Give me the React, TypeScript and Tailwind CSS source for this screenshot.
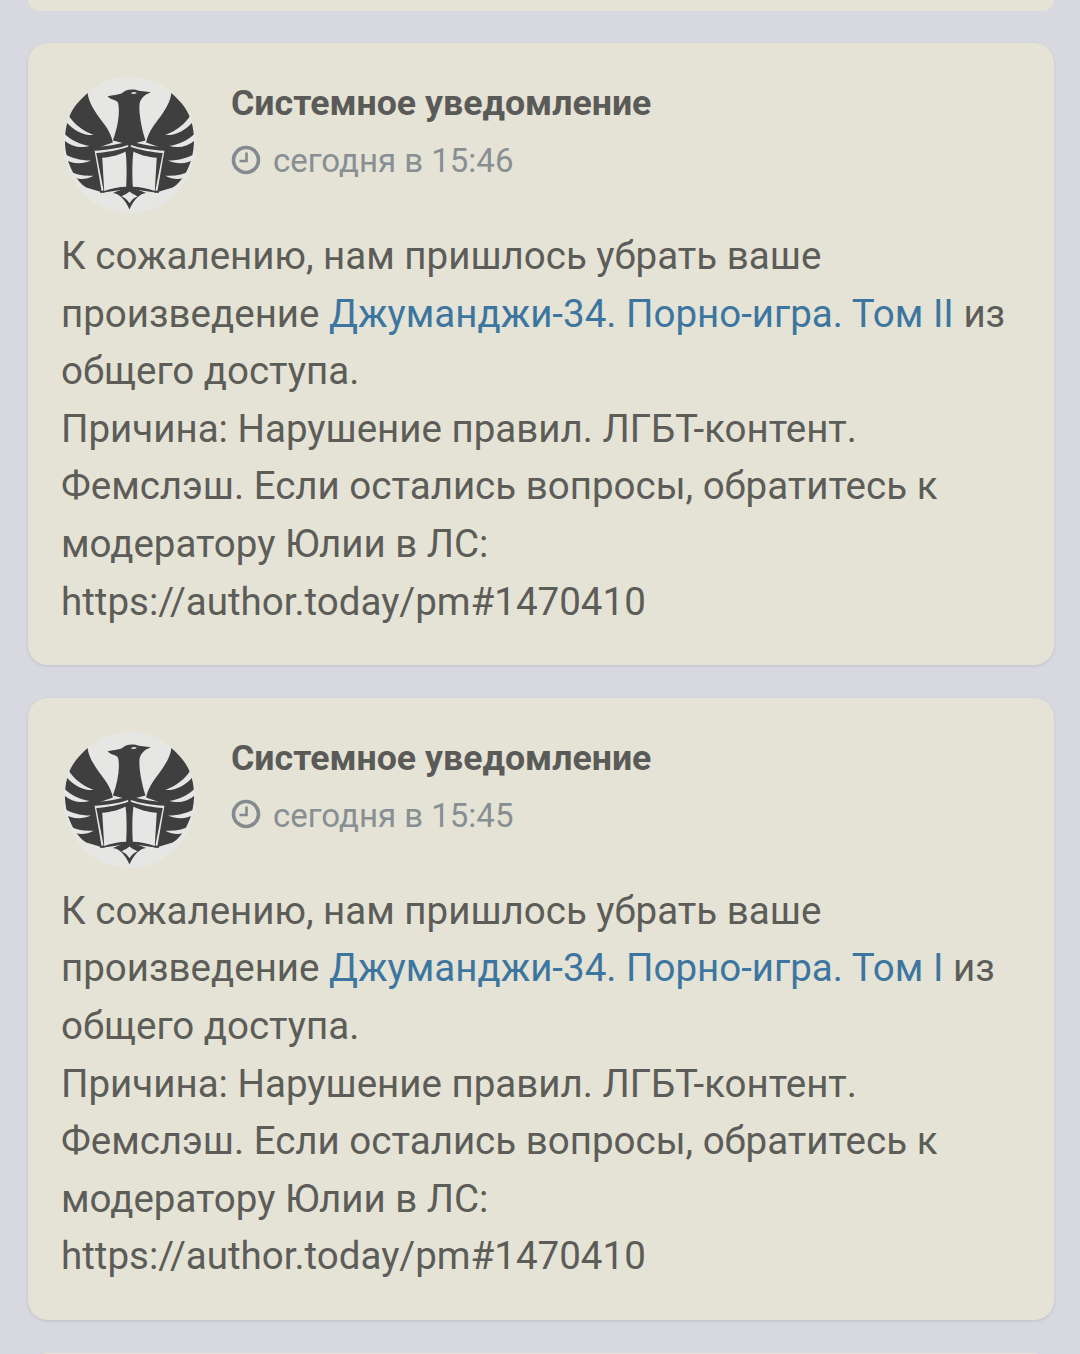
import React from "react";

const font = { fontFamily: '"Roboto", "Noto Sans", sans-serif' };

const Wing = () => (
  <>
    <path
      d="M114 94 C90 115 70 135 58 165 C46 195 42 235 50 270 C58 310 80 350 110 368 L165 384 L130 258 L190 238 C187 222 180 207 168 190 C150 165 118 130 114 94 Z"
      fill="#3f3f3f"
    />
    <path d="M56 158 C72 184 100 204 132 216 C102 218 70 202 50 178 Z" fill="#e6e6e4" />
    <path d="M42 210 C62 230 90 243 120 248 C92 256 62 248 40 228 Z" fill="#e6e6e4" />
    <path d="M40 268 C62 282 92 290 124 290 C96 302 64 300 42 284 Z" fill="#e6e6e4" />
    <path d="M56 318 C76 330 102 336 132 334 C106 348 78 346 62 332 Z" fill="#e6e6e4" />
  </>
);

const Avatar = () => (
  <svg viewBox="40 45 400 400" className="ml-[2px] w-[133px] h-[138px] shrink-0" preserveAspectRatio="none">
    <circle cx="240" cy="245" r="198" fill="#e6e6e4" />
    <Wing />
    <g transform="translate(480 0) scale(-1 1)">
      <Wing />
    </g>
    {/* eagle */}
    <path
      d="M174 104 C190 100 205 100 216 96 C226 84 250 80 268 88 L305 92 C288 97 274 108 270 126 C268 155 276 195 288 232 L240 244 L190 232 C204 195 212 155 206 124 C200 112 184 116 174 104 Z"
      fill="#3f3f3f"
    />
    <path d="M244 95 C250 90 258 91 262 94 C256 98 250 98 244 95 Z" fill="#e6e6e4" />
    {/* book */}
    <path d="M122 252 C165 250 210 244 240 232 C270 244 315 250 358 252 L328 384 L240 372 L152 384 Z" fill="#3f3f3f" />
    <path d="M135 262 C170 260 210 254 236 245 L236 250 C210 260 170 266 140 268 L162 376 L156 378 Z" fill="#e6e6e4" />
    <path d="M345 262 C310 260 270 254 244 245 L244 250 C270 260 310 266 340 268 L318 376 L324 378 Z" fill="#e6e6e4" />
    <path d="M158 282 C185 280 210 274 228 264 C232 290 232 330 230 366 C210 366 185 372 164 378 Z" fill="#e6e6e4" />
    <path d="M322 282 C295 280 270 274 252 264 C248 290 248 330 250 366 C270 366 295 372 316 378 Z" fill="#e6e6e4" />
    {/* tail */}
    <path d="M190 384 C210 376 228 374 240 362 C252 374 270 376 290 384 C272 386 254 400 240 432 C226 400 208 386 190 384 Z" fill="#3f3f3f" />
    <path d="M216 394 C226 388 234 386 240 380 C246 386 254 388 264 394 C254 396 246 404 240 414 C234 404 226 396 216 394 Z" fill="#e6e6e4" />
  </svg>
);

const ClockIcon = () => (
  <svg viewBox="0 0 30 30" className="-mt-[3px] w-[30px] h-[30px] shrink-0" fill="none" stroke="#838a90">
    <circle cx="15" cy="15" r="12.5" strokeWidth="3.6" />
    <path d="M15.5 7.5 V16 H8.5" strokeWidth="2.6" />
  </svg>
);

interface NotificationProps {
  time: string;
  title: string;
}

const Notification: React.FC<NotificationProps> = ({ time, title }) => (
  <div className="rounded-[20px] bg-[#e5e3d5] pt-[33px] pb-[34.6px] pl-[33px] pr-[24px] shadow-[0_1px_3px_rgba(120,120,130,0.25)]">
    <div className="flex items-start">
      <Avatar />
      <div className="ml-[35px]">
        <p className="mt-[5px] text-[35.7px] leading-[44px] font-bold text-[#5a5a58]">Системное уведомление</p>
        <div className="mt-[14px] flex items-center gap-[12px] text-[33px] leading-[44px] text-[#888f93]">
          <ClockIcon />
          <span>сегодня в {time}</span>
        </div>
      </div>
    </div>
    <p className="mt-[13px] text-[38.5px] leading-[57.6px] text-[#5c5c58]">
      К сожалению, нам пришлось убрать ваше произведение{" "}
      <a className="text-[#3c76a0]">Джуманджи-34. Порно-игра. {title}</a> из общего доступа.
      <br />
      Причина: Нарушение правил. ЛГБТ-контент. Фемслэш. Если остались вопросы, обратитесь к модератору Юлии в ЛС:
      <br />
      https://author.today/pm#1470410
    </p>
  </div>
);

export default function App() {
  return (
    <div className="h-[1354px] overflow-hidden bg-[#d8d8e0] pl-[28px] pr-[26px]" style={font}>
      <div className="h-[11px] rounded-b-[20px] bg-[#e5e3d5]" />
      <div className="mt-[32px] flex flex-col gap-[33px]">
        <Notification time="15:46" title="Том II" />
        <Notification time="15:45" title="Том I" />
        <div className="h-[40px] rounded-t-[20px] bg-[#e5e3d5]" />
      </div>
    </div>
  );
}
